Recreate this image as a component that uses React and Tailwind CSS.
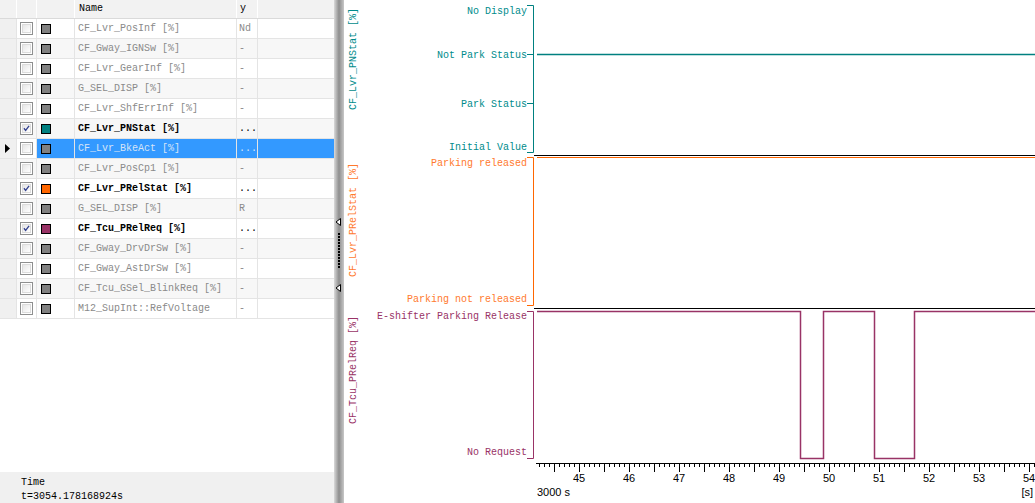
import React from "react";

const rows = [
  { name: "CF_Lvr_PosInf [%]", y: "Nd" },
  { name: "CF_Gway_IGNSw [%]", y: "-" },
  { name: "CF_Lvr_GearInf [%]", y: "-" },
  { name: "G_SEL_DISP [%]", y: "-" },
  { name: "CF_Lvr_ShfErrInf [%]", y: "-" },
  { name: "CF_Lvr_PNStat [%]", y: "...", checked: true, color: "#008080" },
  { name: "CF_Lvr_BkeAct [%]", y: "...", selected: true },
  { name: "CF_Lvr_PosCp1 [%]", y: "-" },
  { name: "CF_Lvr_PRelStat [%]", y: "...", checked: true, color: "#ff6600" },
  { name: "G_SEL_DISP [%]", y: "R" },
  { name: "CF_Tcu_PRelReq [%]", y: "...", checked: true, color: "#993366" },
  { name: "CF_Gway_DrvDrSw [%]", y: "-" },
  { name: "CF_Gway_AstDrSw [%]", y: "-" },
  { name: "CF_Tcu_GSel_BlinkReq [%]", y: "-" },
  { name: "M12_SupInt::RefVoltage", y: "-" },
];

function Checkbox({ checked }) {
  return (
    <div className="w-[13px] h-[13px] border border-[#8e8f8f] bg-white p-[1px]">
      <div className="w-full h-full border border-[#dcdcdc] bg-linear-to-br from-[#e6e6e6] to-white flex items-center justify-center">
        {checked && (
          <svg width="9" height="9" viewBox="0 0 9 9">
            <path d="M1.2 4.2 L3.4 7 L7.8 1.2" fill="none" stroke="#33418f" strokeWidth="1.7" />
          </svg>
        )}
      </div>
    </div>
  );
}

function Row({ r, i }) {
  const alt = i % 2 === 1 ? "bg-[#f7f7f7]" : "bg-white";
  const sel = r.selected;
  const txt = sel ? "text-[#d6e4f7]" : r.checked ? "text-black font-bold" : "text-[#8a8a8a]";
  const cellBg = sel ? "bg-[#3399ff]" : alt;
  return (
    <div className="flex h-[20px] border-b border-[#e4e4e4]">
      <div className="w-[17px] shrink-0 bg-[#f0f0f0] border-r border-[#e4e4e4] flex items-center pl-[5px]">
        {sel && (
          <svg width="5" height="9" viewBox="0 0 5 9">
            <polygon points="0,0 5,4.5 0,9" fill="#000" />
          </svg>
        )}
      </div>
      <div className={`w-[20px] shrink-0 border-r border-[#e4e4e4] flex items-center pl-[3px] ${sel ? "bg-white" : alt}`}>
        <Checkbox checked={r.checked} />
      </div>
      <div className={`w-[38px] shrink-0 border-r border-[#e4e4e4] flex items-center pl-[4px] ${cellBg}`}>
        <div className="w-[10px] h-[10px] border border-black" style={{ backgroundColor: r.color || "#808080" }} />
      </div>
      <div className={`w-[162px] shrink-0 border-r border-[#e4e4e4] flex items-center pl-[3px] whitespace-nowrap overflow-hidden ${cellBg} ${txt}`}>
        {r.name}
      </div>
      <div className={`w-[21px] shrink-0 border-r border-[#e4e4e4] flex items-center pl-[2px] whitespace-nowrap overflow-hidden ${cellBg} ${txt} font-normal`}>
        {r.y}
      </div>
      <div className={`flex-1 ${cellBg}`} />
    </div>
  );
}

function LeftPanel() {
  return (
    <div className="w-[334px] shrink-0 h-full flex flex-col bg-white text-[10px] leading-[12px]" style={{ fontFamily: "'Liberation Mono', monospace" }}>
      <div className="flex h-[19px] bg-[#f2f2f2] border-b border-[#dadada] text-black">
        <div className="w-[17px] border-r border-white" />
        <div className="w-[20px] border-r border-white" />
        <div className="w-[38px] border-r border-white" />
        <div className="w-[162px] border-r border-white flex items-center pl-[4px]">Name</div>
        <div className="w-[21px] border-r border-white flex items-center pl-[3px]">y</div>
        <div className="flex-1" />
      </div>
      {rows.map((r, i) => (
        <Row key={i} r={r} i={i} />
      ))}
      <div className="flex-1" />
      <div className="h-[31px] bg-[#f0f0f0] pl-[21px] pt-[4px] leading-[14px] text-black">
        <div>Time</div>
        <div>t=3054.178168924s</div>
      </div>
    </div>
  );
}

function Splitter() {
  return (
    <div className="relative w-[10px] shrink-0 h-full bg-linear-to-r from-[#dadada] via-[#8e8e8e] to-[#c8c8c8]">
      <svg className="absolute left-[1px] top-[218px]" width="7" height="80" viewBox="0 0 7 80">
        <polygon points="5.5,0.5 5.5,7.5 1,4" fill="#ffffff" stroke="#000" strokeWidth="1" />
        {Array.from({ length: 12 }).map((_, k) => (
          <rect key={k} x="3" y={15 + k * 3} width="2" height="2" fill="#000" />
        ))}
        <polygon points="5.5,66.5 5.5,73.5 1,70" fill="#ffffff" stroke="#000" strokeWidth="1" />
      </svg>
    </div>
  );
}

function Chart() {
  const mono = "'Liberation Mono', monospace";
  const sans = "'Liberation Sans', Arial, sans-serif";
  const teal = "#008080";
  const tealT = "#008b8b";
  const orange = "#ff6600";
  const orangeT = "#ff7a2e";
  const purple = "#993366";
  const ticks = [];
  for (let x = 539; x <= 1034; x += 5) {
    const major = (x - 554) % 25 === 0;
    ticks.push(<line key={x} x1={x + 0.5} x2={x + 0.5} y1={463} y2={major ? 472 : 467} stroke="#000" strokeWidth="1" />);
  }
  const labels = [];
  for (let s = 45; s <= 54; s++) {
    const x = 579 + (s - 45) * 50;
    labels.push(
      <text key={s} x={x} y={482} textAnchor="middle" fontFamily={sans} fontSize="11" fill="#000">
        {s}
      </text>
    );
  }
  return (
    <div className="flex-1 h-full bg-white">
      <svg width="691" height="503" viewBox="344 0 691 503" className="block">
        {/* Band 1 */}
        <text transform="translate(356,110) rotate(-90)" fontFamily={mono} fontSize="10" fill={tealT}>CF_Lvr_PNStat [%]</text>
        <g fontFamily={mono} fontSize="10" fill={tealT} textAnchor="end">
          <text x="527" y="14">No Display</text>
          <text x="527" y="58">Not Park Status</text>
          <text x="527" y="107">Park Status</text>
          <text x="527" y="150">Initial Value</text>
        </g>
        <path d="M527 5.5 H533.5 V152.5 H527 M527 54.5 H533 M527 103.5 H533" fill="none" stroke={teal} strokeWidth="1" />
        <line x1="537" x2="1035" y1="54.5" y2="54.5" stroke={teal} strokeWidth="1.5" />
        <line x1="534" x2="1035" y1="155.5" y2="155.5" stroke="#000" strokeWidth="1" />

        {/* Band 2 */}
        <text transform="translate(356,277) rotate(-90)" fontFamily={mono} fontSize="10" fill={orangeT}>CF_Lvr_PRelStat [%]</text>
        <g fontFamily={mono} fontSize="10" fill={orangeT} textAnchor="end">
          <text x="527" y="166">Parking released</text>
          <text x="527" y="302">Parking not released</text>
        </g>
        <path d="M527 157.5 H533.5 V305.5 H527" fill="none" stroke={orange} strokeWidth="1" />
        <line x1="537" x2="1035" y1="157.5" y2="157.5" stroke={orange} strokeWidth="1" />
        <line x1="534" x2="1035" y1="308.5" y2="308.5" stroke="#000" strokeWidth="1" />

        {/* Band 3 */}
        <text transform="translate(356,424) rotate(-90)" fontFamily={mono} fontSize="10" fill={purple}>CF_Tcu_PRelReq [%]</text>
        <g fontFamily={mono} fontSize="10" fill={purple} textAnchor="end">
          <text x="527" y="319">E-shifter Parking Release</text>
          <text x="527" y="455">No Request</text>
        </g>
        <path d="M527 311.5 H533.5 V458.5 H527" fill="none" stroke={purple} strokeWidth="1" />
        <path d="M537 311.5 H800.5 V458.5 H823.5 V311.5 H874.5 V458.5 H914.5 V311.5 H1035" fill="none" stroke={purple} strokeWidth="1.5" />

        {/* Time axis */}
        <line x1="536" x2="1035" y1="463.5" y2="463.5" stroke="#000" strokeWidth="1" />
        {ticks}
        {labels}
        <text x="537" y="496" fontFamily={sans} fontSize="11" fill="#000">3000  s</text>
        <text x="1033" y="496" textAnchor="end" fontFamily={sans} fontSize="11" fill="#000">[s]</text>
      </svg>
    </div>
  );
}

export default function App() {
  return (
    <div className="w-[1035px] h-[503px] flex overflow-hidden bg-white">
      <LeftPanel />
      <Splitter />
      <Chart />
    </div>
  );
}
